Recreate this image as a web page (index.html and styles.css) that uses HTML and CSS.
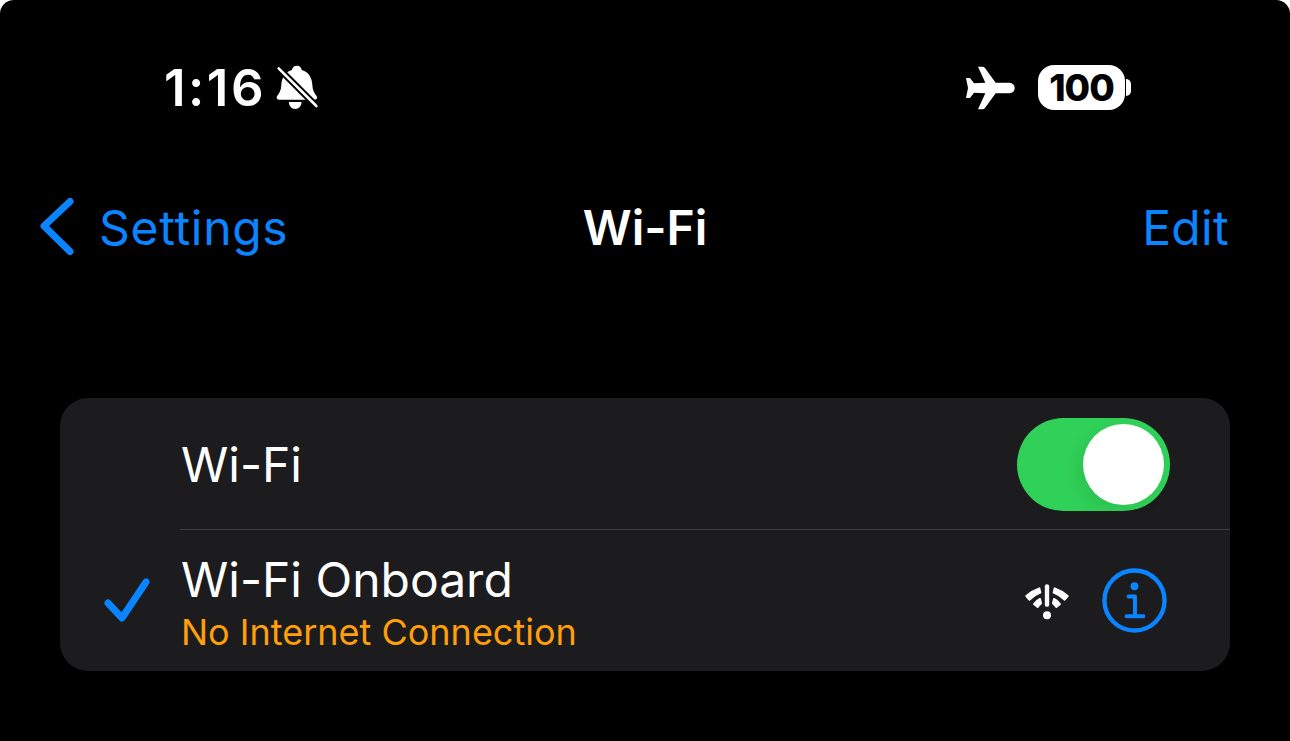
FILE: index.html
```html
<!DOCTYPE html>
<html lang="en">
<head>
    <meta charset="UTF-8">
    <title>Wi-Fi</title>
    <link rel="stylesheet" href="styles.css">
</head>
<body>
<div id="screen">
    <div class="status-bar">
        <span class="clock">1:16</span>
        <svg class="bell-icon" viewBox="378 46 130 136">
            <path d="M441 48c-9 0-14 6-15 13-22 6-31 25-32 47-1 15-5 22-12 31-4 5-2 12 5 12h108c7 0 9-7 5-12-7-9-11-16-12-31-1-22-10-41-32-47-1-7-6-13-15-13z" fill="#fff"/>
            <path d="M417 158h38c0 12-8 21-19 21s-19-9-19-21z" fill="#fff"/>
            <path d="M382 52l122 122" stroke="#000" stroke-width="20"/>
            <path d="M386 56l114 114" stroke="#fff" stroke-width="8" stroke-linecap="round"/>
        </svg>
        <div class="status-right">
            <svg class="plane-icon" viewBox="48 48 147 132">
                <path d="M84 50L98 50Q102 50 105 54L137 98L178 98Q194 100 194 114Q194 128 178 130L137 130L105 174Q102 178 98 178L84 178L106 130L72 128L60 144L48 144L54 114L48 84L60 84L72 100L106 98Z" fill="#fff"/>
            </svg>
            <div class="battery"><span class="battery-level">100</span></div>
            <div class="battery-tip"></div>
        </div>
    </div>

    <div class="nav-bar">
        <div class="nav-back">
            <svg class="chevron-icon" viewBox="0 0 38 60">
                <path d="M31 4.500L5 29L31 54.500" fill="none" stroke="#0a84ff" stroke-width="7" stroke-linecap="round" stroke-linejoin="round"/>
            </svg>
            <span>Settings</span>
        </div>
        <div class="nav-title">Wi-Fi</div>
        <div class="nav-edit">Edit</div>
    </div>

    <div class="card">
        <div class="row row-toggle">
            <span class="row-title">Wi-Fi</span>
            <div class="toggle"><div class="knob"></div></div>
        </div>
        <div class="row row-network">
            <svg class="check-icon" viewBox="0 0 48 48">
                <path d="M5 26L19 41L43 5" fill="none" stroke="#0a84ff" stroke-width="7" stroke-linecap="round" stroke-linejoin="round"/>
            </svg>
            <div class="network-text">
                <div class="row-title">Wi-Fi Onboard</div>
                <div class="row-sub">No Internet Connection</div>
            </div>
            <svg class="wifi-icon" viewBox="70 92 142 114">
                <g fill="#fff" stroke="#fff" stroke-width="6" stroke-linejoin="round">
                    <path d="M79 134Q97 118 118 111L121 124Q104 130 88 145Z"/>
                    <path d="M102 158Q110 148 120 143L123 156Q117 160 113 167Z"/>
                    <path d="M203 134Q185 118 164 111L161 124Q178 130 194 145Z"/>
                    <path d="M180 158Q172 148 162 143L159 156Q165 160 169 167Z"/>
                </g>
                <path d="M141 105V160" fill="none" stroke="#fff" stroke-width="13" stroke-linecap="round"/>
                <circle cx="141" cy="192" r="12" fill="#fff"/>
            </svg>
            <svg class="info-icon" viewBox="0 0 66 66">
                <circle cx="33" cy="33" r="30.5" fill="none" stroke="#0a84ff" stroke-width="4.5"/>
                <circle cx="33" cy="18.500" r="4" fill="#0a84ff"/>
                <path d="M27 29H33.500V49M25 49H42" fill="none" stroke="#0a84ff" stroke-width="4" stroke-linecap="round" stroke-linejoin="round"/>
            </svg>
        </div>
    </div>
</div>
</body>
</html>
```

FILE: styles.css
```css
html, body {
    margin: 0;
    padding: 0;
    background-color: #FFFFFF;
}

#screen {
    width: 1290px;
    height: 741px;
    overflow: hidden;
    background-color: #000000;
    border-radius: 14px 14px 0 0;
    color: #FFFFFF;
    font-family: Inter, "Liberation Sans", sans-serif;
}

.status-bar {
    display: flex;
    align-items: center;
    height: 45px;
    padding: 65px 159px 0 164px;
}

.clock {
    font-size: 51px;
    font-weight: 600;
    letter-spacing: 2.500px;
}

.bell-icon {
    width: 43px;
    height: 45px;
    margin-left: 10px;
}

.status-right {
    display: flex;
    align-items: center;
    margin-left: auto;
}

.plane-icon {
    width: 49px;
    height: 44px;
}

.battery {
    display: flex;
    align-items: center;
    justify-content: center;
    width: 87px;
    height: 45px;
    margin-top: -1px;
    margin-left: 23px;
    background-color: #FFFFFF;
    border-radius: 16px;
}

.battery-level {
    color: #000000;
    font-size: 37px;
    font-weight: 800;
    letter-spacing: -1px;
}

.battery-tip {
    width: 5px;
    height: 17px;
    margin-left: 1px;
    background-color: #FFFFFF;
    border-radius: 0 9px 9px 0;
}

.nav-bar {
    display: grid;
    grid-template-columns: 1fr auto 1fr;
    align-items: center;
    height: 60px;
    margin-top: 87px;
    padding: 0 61px;
    font-size: 48px;
}

.nav-back {
    display: flex;
    align-items: center;
    gap: 22px;
    margin-left: -22px;
    color: #0A84FF;
    letter-spacing: 0.7px;
}

.chevron-icon {
    width: 38px;
    height: 60px;
}

.nav-title {
    font-weight: 600;
}

.nav-edit {
    text-align: right;
    color: #0A84FF;
    letter-spacing: 0.3px;
}

.card {
    margin: 0 60px;
    margin-top: 141px;
    background-color: #1C1C1E;
    border-radius: 28px;
    overflow: hidden;
}

.row {
    display: flex;
    align-items: center;
    box-sizing: border-box;
}

.row-toggle {
    height: 132px;
    margin-left: 120px;
    padding: 2px 60px 0 1px;
    border-bottom: 1px solid #3D3D40;
}

.row-title {
    font-size: 48px;
    line-height: 56px;
}

.toggle {
    display: flex;
    align-items: center;
    justify-content: flex-end;
    width: 153px;
    height: 93px;
    margin-left: auto;
    padding-right: 6px;
    box-sizing: border-box;
    background-color: #30D158;
    border-radius: 47px;
}

.knob {
    width: 81px;
    height: 81px;
    background-color: #FFFFFF;
    border-radius: 50%;
    box-shadow: -6px 6px 16px rgba(0, 0, 0, 0.08);
}

.row-network {
    height: 141px;
    padding: 0 63px 0 43px;
}

.check-icon {
    width: 48px;
    height: 48px;
}

.network-text {
    margin-top: 5px;
    margin-left: 30px;
}

.network-text .row-title {
    margin-top: -1px;
}

.row-sub {
    margin-top: 3px;
    color: #FF9F0A;
    font-size: 36px;
    line-height: 42px;
}

.wifi-icon {
    width: 48px;
    height: 38px;
    margin-left: auto;
}

.info-icon {
    width: 65px;
    height: 65px;
    margin-left: 31px;
}
```
